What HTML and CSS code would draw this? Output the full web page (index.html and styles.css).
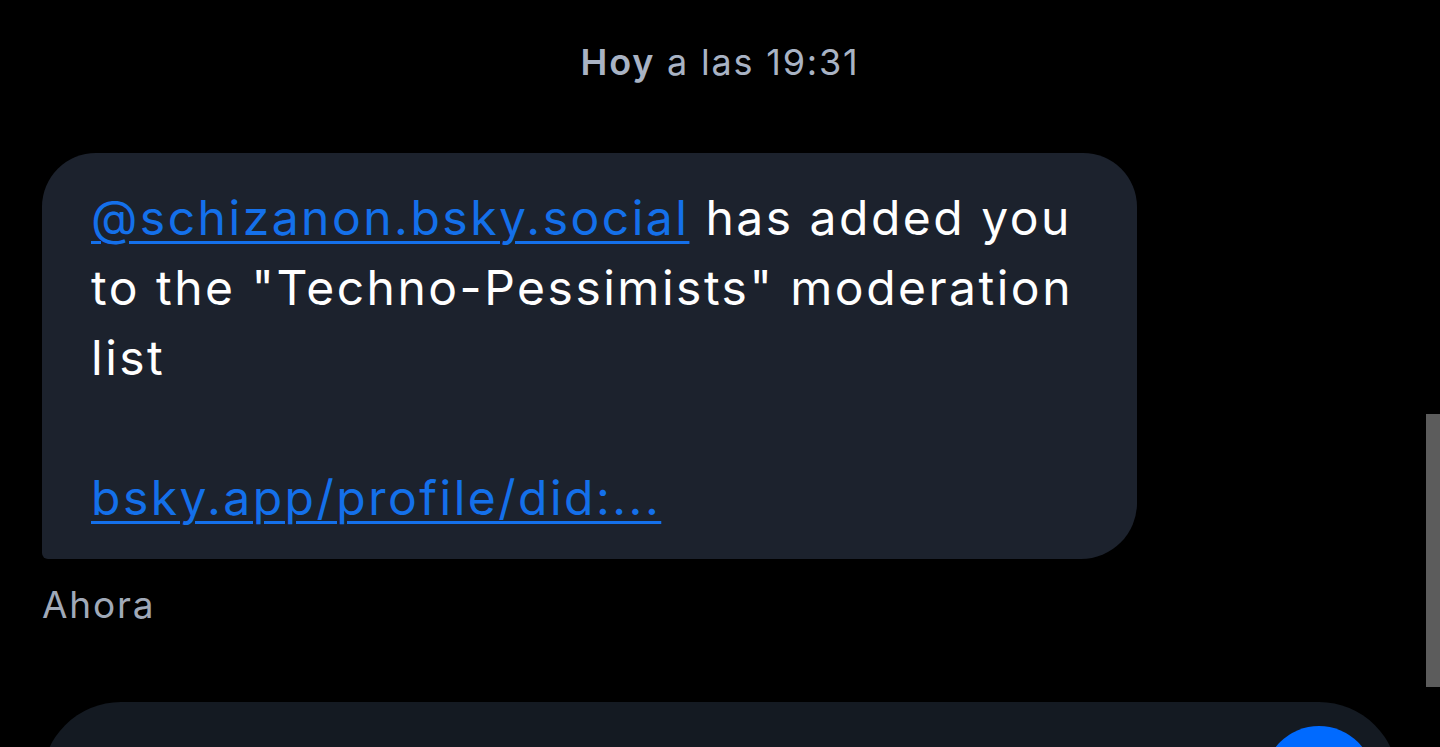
FILE: index.html
```html
<!DOCTYPE html>
<html lang="es">
<head>
    <meta charset="UTF-8">
    <meta name="viewport" content="width=device-width, initial-scale=1.0">
    <title>Chat</title>
    <link rel="stylesheet" href="styles.css">
</head>
<body>
    <div class="chat">
        <p class="fecha"><b>Hoy</b> a las 19:31</p>

        <div class="burbuja">
            <a href="#" class="enlace">@schizanon.bsky.social</a> has added you to the "Techno-Pessimists" moderation list<br><br><a href="#" class="enlace">bsky.app/profile/did:...</a>
        </div>
        <p class="hora">Ahora</p>

        <div class="composer">
            <div class="campo"></div>
            <div class="enviar"></div>
        </div>
    </div>
    <div class="scroll"></div>
</body>
</html>
```

FILE: styles.css
```css
body {
    font-family: Inter, "Noto Sans", sans-serif;
    background-color: #000;
    color: #fff;
    margin: 0;
    padding: 0;
    height: 747px;
    overflow: hidden;
}

.chat {
    padding: 0 42px;
}

.fecha {
    margin: 41px 0 0;
    text-align: center;
    font-size: 36px;
    letter-spacing: 1.8px;
    line-height: 1.2;
    color: #a9b3c4;
}

.fecha b {
    font-weight: 600;
}

.burbuja {
    margin-top: 69px;
    width: 1095px;
    box-sizing: border-box;
    padding: 30px 49px 26px;
    background-color: #1c222d;
    border-radius: 54px 54px 56px 6px;
    font-size: 48px;
    letter-spacing: 2.5px;
    line-height: 70px;
}

.enlace {
    color: #1470ea;
    text-decoration: underline;
    text-decoration-thickness: 3px;
    text-underline-offset: 6px;
}

.hora {
    margin: 24px 0 0;
    font-size: 37px;
    letter-spacing: 1.8px;
    line-height: 1.2;
    color: #a0a9b8;
}

.composer {
    margin-top: 74px;
    display: flex;
    align-items: center;
    padding: 24px;
    background-color: #141a22;
    border-radius: 80px;
}

.campo {
    flex: 1;
    height: 110px;
}

.enviar {
    width: 110px;
    height: 110px;
    border-radius: 50%;
    background-color: #006aff;
}

.scroll {
    position: fixed;
    right: 0;
    top: 414px;
    width: 14px;
    height: 273px;
    background-color: #5c5c5c;
}
```
